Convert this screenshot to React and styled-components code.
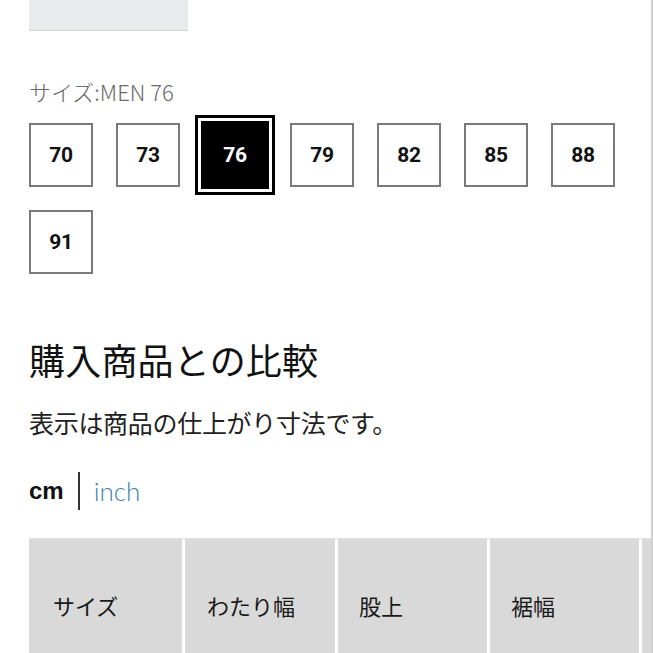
import React from "react";
import styled, { createGlobalStyle } from "styled-components";

const Global = createGlobalStyle`
  html, body { margin: 0; padding: 0; background: #fff; overflow: hidden; }
  body { font-family: "Noto Sans CJK JP", "Noto Sans", sans-serif; color: #111; }
`;

const Page = styled.div`
  width: 653px;
  height: 653px;
  box-sizing: border-box;
  border-right: 2px solid #cfcfcf;
  padding-left: 29px;
  overflow: hidden;
  display: flex;
  flex-direction: column;
`;

const TopButton = styled.div`
  width: 159px;
  height: 31px;
  box-sizing: border-box;
  background: #e9eaec;
  border-bottom: 1px solid #d6d7d9;
`;

const SizeLabel = styled.div`
  margin-top: 45px;
  font-size: 22px;
  line-height: 30px;
  color: #6a6a6a;
  font-weight: 300;
`;

const SizeGrid = styled.div`
  margin-top: 17px;
  display: grid;
  grid-template-columns: repeat(7, 64px);
  grid-auto-rows: 64px;
  column-gap: 23px;
  row-gap: 23px;
`;

const SizeBox = styled.div`
  box-sizing: border-box;
  width: 64px;
  height: 64px;
  display: flex;
  align-items: center;
  justify-content: center;
  font-family: Roboto, "Liberation Sans", sans-serif;
  font-weight: 700;
  font-size: 21px;
  letter-spacing: -0.3px;
  border: 2px solid ${(p) => (p.$active ? "#000" : "#7a7a7a")};
  background: ${(p) => (p.$active ? "#000" : "#fff")};
  color: ${(p) => (p.$active ? "#fff" : "#111")};
  box-shadow: ${(p) =>
    p.$active ? "0 0 0 2px #000, 0 0 0 5px #fff, 0 0 0 8px #000" : "none"};
`;

const Heading = styled.h2`
  margin: 63px 0 0;
  font-size: 36px;
  line-height: 44px;
  font-weight: 400;
  color: #111;
  letter-spacing: 0.2px;
`;

const Note = styled.p`
  margin: 25px 0 0;
  font-size: 25px;
  line-height: 32px;
  color: #222;
  letter-spacing: -0.3px;
`;

const UnitRow = styled.div`
  margin-top: 34px;
  display: flex;
  align-items: center;
  gap: 14px;
  height: 38px;
  font-size: 24px;
`;

const Unit = styled.span`
  font-weight: ${(p) => (p.$active ? 700 : 300)};
  font-size: ${(p) => (p.$active ? 24 : 26)}px;
  color: ${(p) => (p.$active ? "#111" : "#3f80a8")};
  font-family: ${(p) =>
    p.$active ? '"Liberation Sans", Arial, sans-serif' : 'Lato, "Open Sans", sans-serif'};
`;

const Divider = styled.span`
  width: 2px;
  height: 38px;
  background: #333;
`;

const TableWrap = styled.div`
  margin-top: 28px;
  overflow: hidden;
  flex: 1;
`;

const HeaderRow = styled.div`
  display: flex;
  gap: 3px;
  width: max-content;
  border-top: 1px solid #e4e4e4;
`;

const HeaderCell = styled.div`
  flex: none;
  width: ${(p) => p.$w}px;
  height: 132px;
  box-sizing: border-box;
  background: #d9d9d9;
  padding-left: ${(p) => p.$pad}px;
  display: flex;
  align-items: center;
  font-size: 22px;
  color: #1a1a1a;
`;

const sizes = ["70", "73", "76", "79", "82", "85", "88", "91"];
const headers = [
  ["サイズ", 153, 24],
  ["わたり幅", 150, 22],
  ["股上", 149, 21],
  ["裾幅", 149, 21],
  ["", 150, 21],
];

export default function App() {
  return (
    <>
      <Global />
      <Page>
        <TopButton />
        <SizeLabel>サイズ:MEN 76</SizeLabel>
        <SizeGrid>
          {sizes.map((s) => (
            <SizeBox key={s} $active={s === "76"}>
              {s}
            </SizeBox>
          ))}
        </SizeGrid>
        <Heading>購入商品との比較</Heading>
        <Note>表示は商品の仕上がり寸法です。</Note>
        <UnitRow>
          <Unit $active>cm</Unit>
          <Divider />
          <Unit>inch</Unit>
        </UnitRow>
        <TableWrap>
          <HeaderRow>
            {headers.map(([t, w, pad], i) => (
              <HeaderCell key={i} $w={w} $pad={pad}>
                {t}
              </HeaderCell>
            ))}
          </HeaderRow>
        </TableWrap>
      </Page>
    </>
  );
}
